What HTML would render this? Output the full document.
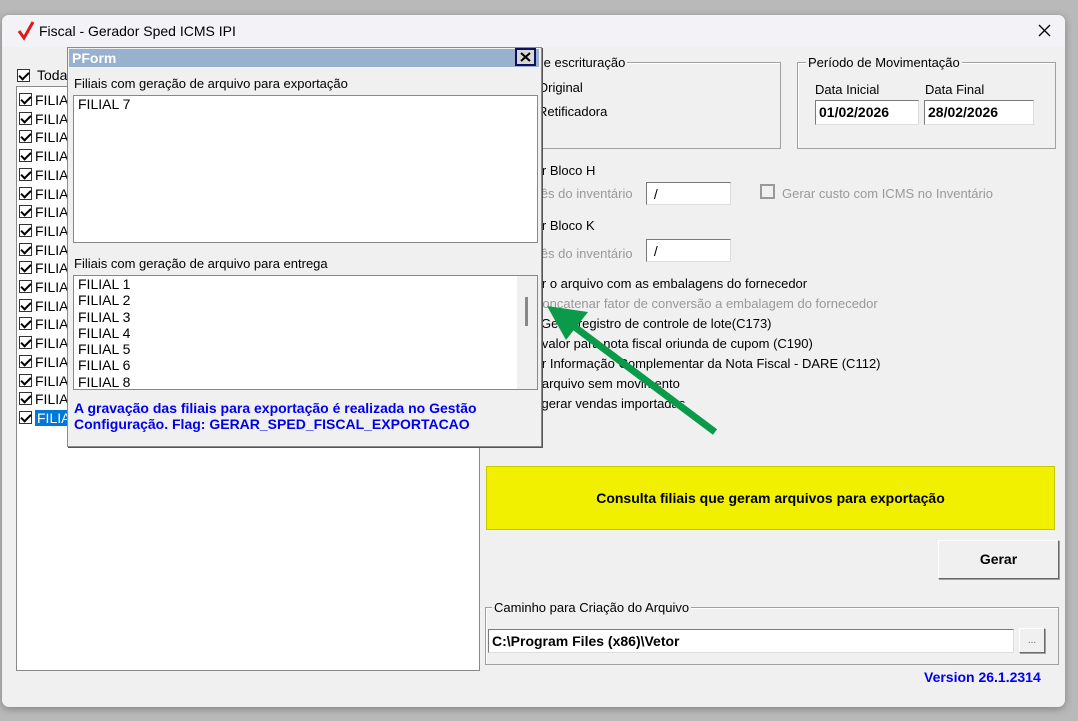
<!DOCTYPE html>
<html><head><meta charset="utf-8"><style>
*{margin:0;padding:0;box-sizing:border-box}
body{width:1078px;height:721px;background:#b9b9b9;position:relative;overflow:hidden;font-family:"Liberation Sans",sans-serif;font-size:13px;color:#000}
.a{position:absolute;white-space:nowrap}
.win{position:absolute;left:2px;top:15px;width:1063px;height:692px;background:#f0f0f0;border-radius:7px;overflow:hidden;box-shadow:0 2px 8px rgba(0,0,0,.3)}
.tb{position:absolute;left:0;top:0;width:100%;height:32px;background:#f3f3f7}
.cb{position:absolute;width:13px;height:13px;border:1px solid #333;background:#fff}
.cb:after{content:"";position:absolute;left:3px;top:0px;width:4px;height:8px;border:solid #000;border-width:0 2px 2px 0;transform:rotate(45deg)}
.grp{position:absolute;border:1px solid #a0a0a0;box-shadow:1px 1px 0 #fff inset}
.lg{position:absolute;top:-8px;background:#f0f0f0;padding:0 2px}
.inp{position:absolute;background:#fff;border:1px solid #7a7a7a;border-right-color:#ddd;border-bottom-color:#ddd;font-weight:bold;padding-left:3px;line-height:22px;font-size:14px}
.gray{color:#999}
.btn{position:absolute;background:#f0f0f0;border:1px solid #fff;border-right-color:#696969;border-bottom-color:#696969;box-shadow:1px 1px 0 #a0a0a0;text-align:center;font-weight:bold}
</style></head><body>
<div class="win">
 <div class="tb"></div>
 <svg class="a" style="left:15px;top:6px" width="18" height="20"><path d="M2 10 L7 17 L16 1" stroke="#e01818" stroke-width="3" fill="none"/></svg>
 <div class="a" style="left:37px;top:8px;font-size:14px">Fiscal - Gerador Sped ICMS IPI</div>
 <svg class="a" style="left:1036px;top:9px" width="13" height="13"><path d="M1 1L12 12M12 1L1 12" stroke="#000" stroke-width="1.3"/></svg>
</div>
<!-- left panel -->
<div class="cb" style="left:17px;top:69px"></div>
<div class="a" style="left:37px;top:67px;font-size:14px">Todas</div>
<div class="a" style="left:16px;top:86px;width:464px;height:585px;background:#fff;border:1px solid #888"></div>
<div id="lst"></div>
<!-- right side -->
<div class="grp" style="left:482px;top:62px;width:299px;height:87px"><div class="lg" style="left:23px">Tipo de escrituração</div></div>
<div class="a" style="left:538px;top:80px">Original</div>
<div class="a" style="left:538px;top:104px">Retificadora</div>
<div class="grp" style="left:797px;top:62px;width:259px;height:87px"><div class="lg" style="left:8px">Período de Movimentação</div></div>
<div class="a" style="left:815px;top:82px">Data Inicial</div>
<div class="a" style="left:925px;top:82px">Data Final</div>
<div class="inp" style="left:815px;top:100px;width:104px;height:25px">01/02/2026</div>
<div class="inp" style="left:924px;top:100px;width:110px;height:25px">28/02/2026</div>
<div class="a" style="left:513px;top:163px">Gerar Bloco H</div>
<div class="a gray" style="left:530px;top:186px">Mês do inventário</div>
<div class="inp" style="left:646px;top:182px;width:85px;height:23px;font-weight:normal">&nbsp;/</div>
<div class="a" style="left:760px;top:184px;width:15px;height:15px;border:2px solid #999;background:#f0f0f0"></div>
<div class="a gray" style="left:782px;top:186px">Gerar custo com ICMS no Inventário</div>
<div class="a" style="left:513px;top:218px">Gerar Bloco K</div>
<div class="a gray" style="left:530px;top:246px">Mês do inventário</div>
<div class="inp" style="left:646px;top:239px;width:85px;height:23px;font-weight:normal">&nbsp;/</div>
<div class="a" style="left:513px;top:276px">Gerar o arquivo com as embalagens do fornecedor</div>
<div class="a gray" style="left:533px;top:296px">Concatenar fator de conversão a embalagem do fornecedor</div>
<div class="a" style="left:541px;top:316px">Gerar registro de controle de lote(C173)</div>
<div class="a" style="left:505px;top:336px">Gerar valor para nota fiscal oriunda de cupom (C190)</div>
<div class="a" style="left:513px;top:356px">Gerar Informação Complementar da Nota Fiscal - DARE (C112)</div>
<div class="a" style="left:505px;top:376px">Gerar arquivo sem movimento</div>
<div class="a" style="left:514px;top:396px">Não gerar vendas importadas</div>
<div class="a" style="left:486px;top:466px;width:569px;height:64px;background:#f0f000;border:1px solid #c8c800;text-align:center;line-height:62px;font-weight:bold;font-size:14px">Consulta filiais que geram arquivos para exportação</div>
<div class="btn" style="left:938px;top:540px;width:121px;height:39px;line-height:37px;font-size:14px">Gerar</div>
<div class="grp" style="left:485px;top:607px;width:574px;height:58px"><div class="lg" style="left:6px">Caminho para Criação do Arquivo</div></div>
<div class="inp" style="left:488px;top:629px;width:526px;height:24px">C:\Program Files (x86)\Vetor</div>
<div class="btn" style="left:1019px;top:628px;width:26px;height:25px;font-weight:normal;font-size:10px;color:#666;line-height:24px">...</div>
<div class="a" style="left:924px;top:669px;color:#0000ee;font-weight:bold;font-size:14px">Version 26.1.2314</div>
<!-- popup -->
<div class="a" style="left:67px;top:47px;width:475px;height:400px;background:#f0f0f0;border:1px solid #8a8a8a;box-shadow:1px 1px 0 #555"></div>
<div class="a" style="left:69px;top:49px;width:470px;height:18px;background:#98b1cf;color:#fff;font-weight:bold;font-size:14px;line-height:18px;padding-left:3px">PForm</div>
<div class="a" style="left:515px;top:48px;width:21px;height:18px;background:#d8d8d8;border:2px solid #101060"></div>
<svg class="a" style="left:520px;top:52px" width="11" height="10"><path d="M1 1L10 9M10 1L1 9" stroke="#000" stroke-width="2"/></svg>
<div class="a" style="left:74px;top:76px">Filiais com geração de arquivo para exportação</div>
<div class="a" style="left:73px;top:95px;width:465px;height:148px;background:#fff;border:1px solid #888;padding:0 0 0 4px;font-size:14px">FILIAL 7</div>
<div class="a" style="left:74px;top:256px">Filiais com geração de arquivo para entrega</div>
<div class="a" style="left:73px;top:275px;width:465px;height:115px;background:#fff;border:1px solid #888;padding:0 0 0 4px;font-size:14px;line-height:16.3px;overflow:hidden">FILIAL 1<br>FILIAL 2<br>FILIAL 3<br>FILIAL 4<br>FILIAL 5<br>FILIAL 6<br>FILIAL 8</div>
<div class="a" style="left:517px;top:276px;width:20px;height:113px;background:#f0f0f0"></div>
<div class="a" style="left:525px;top:297px;width:3px;height:29px;background:#888"></div>
<div class="a" style="left:74px;top:400px;color:#0000ee;font-weight:bold;font-size:14px;line-height:16px">A gravação das filiais para exportação é realizada no Gestão<br>Configuração. Flag: GERAR_SPED_FISCAL_EXPORTACAO</div>
<!-- arrow -->
<svg class="a" style="left:0;top:0" width="1078" height="721"><line x1="715" y1="432" x2="568" y2="322" stroke="#0b9a4a" stroke-width="7"/><polygon points="547,306 588,312 566,340" fill="#0b9a4a"/></svg>
<script>
var h='';for(var i=0;i<18;i++){var y=92+i*18.7;h+='<div class="cb" style="left:19px;top:'+(y+1)+'px"></div><div class="a" style="left:35px;top:'+y+'px;font-size:14px;'+(i==17?'background:#0078d7;color:#fff;padding:0 2px;':'')+'">FILIAL '+(i+1)+'</div>';}
document.getElementById('lst').innerHTML=h;
</script>
</body></html>
